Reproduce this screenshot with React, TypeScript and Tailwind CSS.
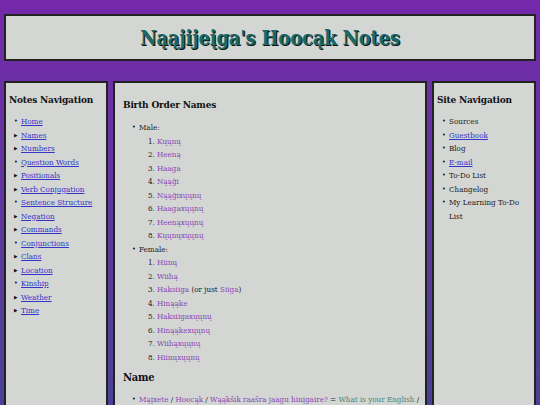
import React from "react";

const notes: { label: string; tri: boolean }[] = [
  { label: "Home", tri: false },
  { label: "Names", tri: true },
  { label: "Numbers", tri: true },
  { label: "Question Words", tri: false },
  { label: "Positionals", tri: true },
  { label: "Verb Conjugation", tri: true },
  { label: "Sentence Structure", tri: false },
  { label: "Negation", tri: true },
  { label: "Commands", tri: true },
  { label: "Conjunctions", tri: false },
  { label: "Clans", tri: true },
  { label: "Location", tri: true },
  { label: "Kinship", tri: false },
  { label: "Weather", tri: true },
  { label: "Time", tri: true },
];

const site: { label: string; link: boolean }[] = [
  { label: "Sources", link: false },
  { label: "Guestbook", link: true },
  { label: "Blog", link: false },
  { label: "E-mail", link: true },
  { label: "To-Do List", link: false },
  { label: "Changelog", link: false },
  { label: "My Learning To-Do List", link: false },
];

const male = ["Kųųnų", "Heeną", "Haaga", "Nąąği", "Nąąğixųųnų", "Haagaxųųnų", "Heenąxųųnų", "Kųųnųxųųnų"];
const female = ["Hiinų", "Wiihą", null, "Hinąąke", "Haksiigaxųųnų", "Hinąąkexųųnų", "Wiihąxųųnų", "Hiinųxųųnų"];

function Bullet({ tri }: { tri: boolean }) {
  return tri ? (
    <span className="inline-block w-[7px] shrink-0 text-[5px] leading-[13.5px] text-[#111]">▶</span>
  ) : (
    <span className="inline-block w-[7px] shrink-0 text-[7px] leading-[13.5px] text-[#111]">•</span>
  );
}

export default function App() {
  return (
    <div className="h-[405px] w-[540px] overflow-hidden bg-gradient-to-b from-[#7428aa] to-[#4a4096] px-[4px] pt-[14px] font-['DejaVu_Serif',serif] font-stretch-condensed text-[#222]">
      <header className="flex h-[47px] items-center justify-center border-2 border-[#222] bg-[#d3d6d3]">
        <h1 className="text-[20px] font-bold tracking-[-0.2px] text-[#1b6a68] [text-shadow:1px_1px_0_#111]">
          Nąąjijeįga's Hoocąk Notes
        </h1>
      </header>

      <div className="mt-[20px] flex gap-[5px]">
        <aside className="h-[400px] w-[104px] shrink-0 border-2 border-[#222] bg-[#d3d6d3] pl-[3px] pt-[9px]">
          <h2 className="text-[10px] font-bold tracking-[-0.2px] text-[#111]">Notes Navigation</h2>
          <ul className="mt-[8px] pl-[5px]">
            {notes.map((n) => (
              <li key={n.label} className="flex h-[13.5px] items-center text-[8px] leading-[13.5px]">
                <Bullet tri={n.tri} />
                <a className="text-[#3434c8] underline">{n.label}</a>
              </li>
            ))}
          </ul>
        </aside>

        <main className="h-[400px] w-[314px] shrink-0 border-2 border-[#222] bg-[#d3d6d3] pl-[8px] pt-[14px] text-[8px]">
          <h2 className="text-[10px] font-bold tracking-[-0.2px] text-[#111]">Birth Order Names</h2>
          <ul className="mt-[9px] pl-[9px]">
            <li>
              <div className="flex h-[13.5px] items-center leading-[13.5px]">
                <Bullet tri={false} />
                <span>Male:</span>
              </div>
              <ol className="pl-[16px]">
                {male.map((m, i) => (
                  <li key={m} className="flex h-[13.5px] items-center leading-[13.5px]">
                    <span className="w-[9px]">{i + 1}.</span>
                    <a className="text-[#8a46b6]">{m}</a>
                  </li>
                ))}
              </ol>
            </li>
            <li>
              <div className="flex h-[13.5px] items-center leading-[13.5px]">
                <Bullet tri={false} />
                <span>Female:</span>
              </div>
              <ol className="pl-[16px]">
                {female.map((m, i) => (
                  <li key={i} className="flex h-[13.5px] items-center leading-[13.5px]">
                    <span className="w-[9px]">{i + 1}.</span>
                    {m === null ? (
                      <span>
                        <a className="text-[#8a46b6]">Haksiiga</a> (or just{" "}
                        <a className="text-[#8a46b6]">Siiga</a>)
                      </span>
                    ) : (
                      <a className="text-[#8a46b6]">{m}</a>
                    )}
                  </li>
                ))}
              </ol>
            </li>
          </ul>
          <h2 className="mt-[6px] text-[11px] font-bold tracking-[-0.2px] text-[#111]">Name</h2>
          <ul className="mt-[6px] pl-[9px]">
            <li className="flex h-[13.5px] items-center whitespace-nowrap leading-[13.5px]">
              <Bullet tri={false} />
              <span>
                <a className="text-[#8a46b6]">Mąįxete</a> / <a className="text-[#8a46b6]">Hoocąk</a> /{" "}
                <a className="text-[#8a46b6]">Wąąkšik raašra jaagu hinįgaire?</a> ={" "}
                <a className="text-[#3f8a80]">What is your English</a> /
              </span>
            </li>
          </ul>
        </main>

        <aside className="h-[400px] w-[104px] shrink-0 border-2 border-[#222] bg-[#d3d6d3] pl-[3px] pr-[4px] pt-[9px]">
          <h2 className="text-[10px] font-bold tracking-[-0.2px] text-[#111]">Site Navigation</h2>
          <ul className="mt-[8px] pl-[5px]">
            {site.map((s) => (
              <li key={s.label} className="flex items-start text-[8px] leading-[13.5px]">
                <Bullet tri={false} />
                {s.link ? (
                  <a className="text-[#3434c8] underline">{s.label}</a>
                ) : (
                  <span>{s.label}</span>
                )}
              </li>
            ))}
          </ul>
        </aside>
      </div>
    </div>
  );
}
